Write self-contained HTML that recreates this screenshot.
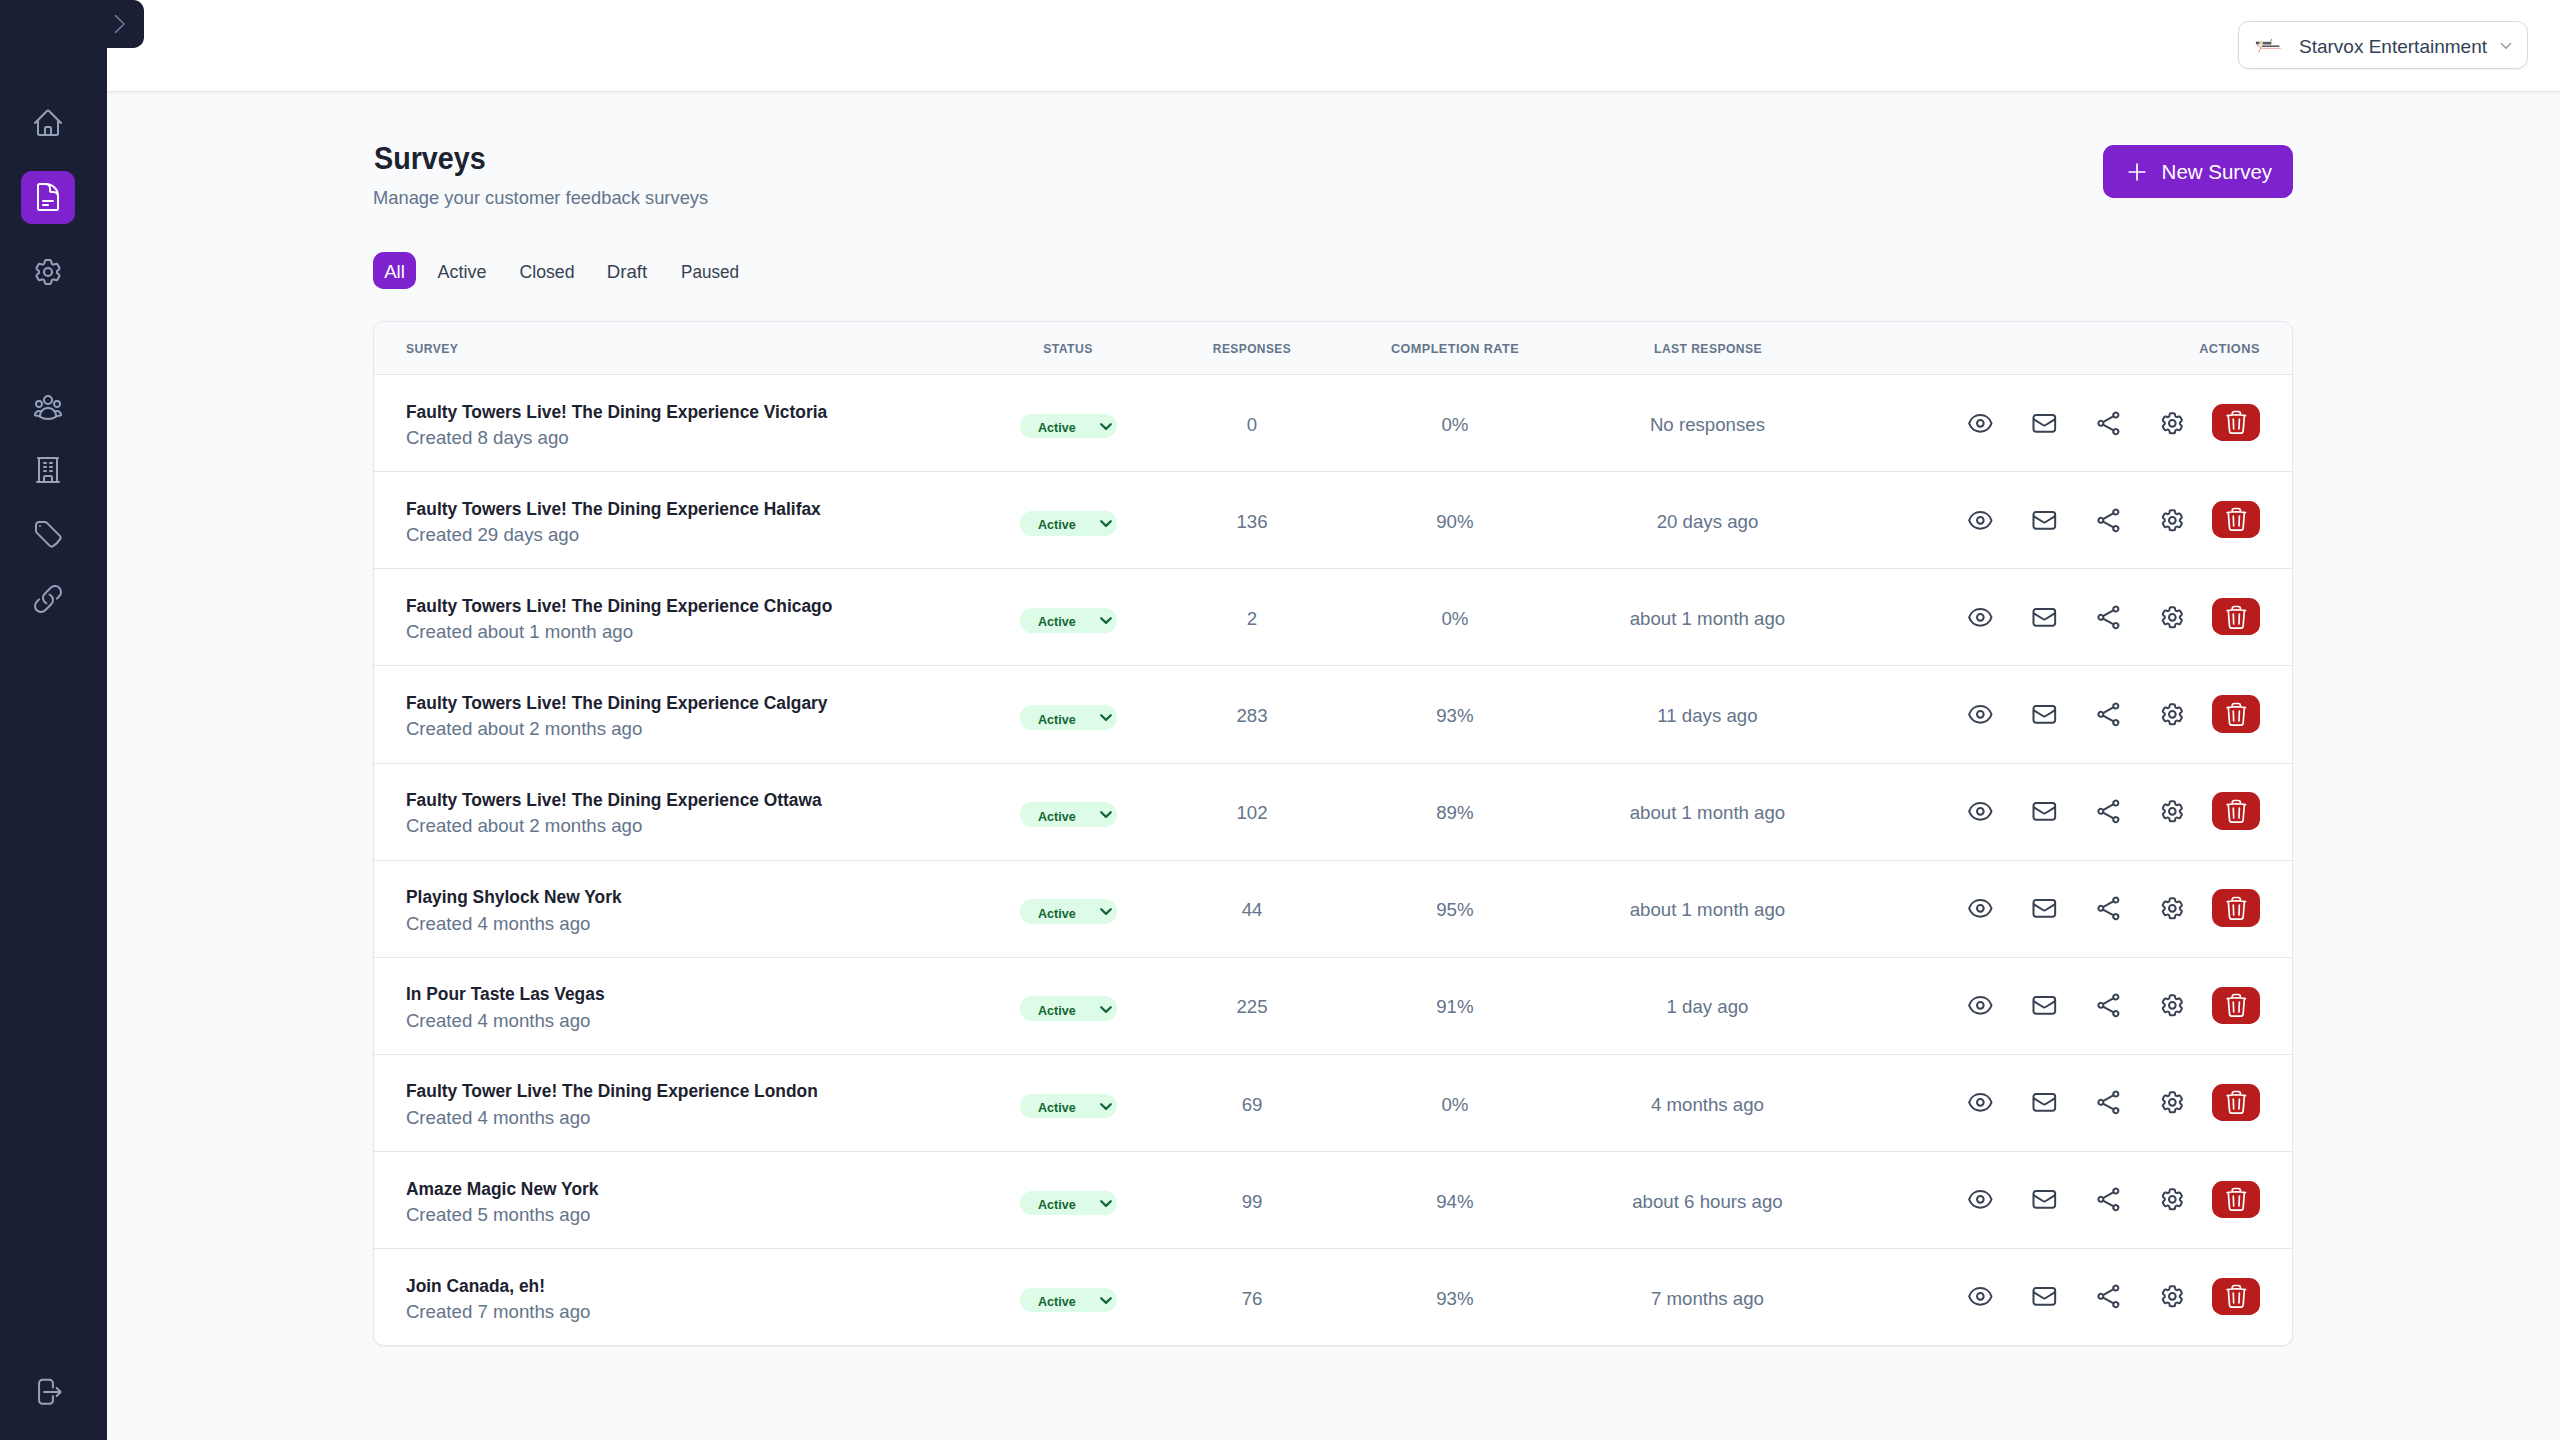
<!DOCTYPE html><html><head><meta charset="utf-8"><style>*{box-sizing:border-box;margin:0;padding:0}
html,body{width:2560px;height:1440px;overflow:hidden}
body{font-family:"Liberation Sans",sans-serif;background:#f8fafc;position:relative;color:#111827}
.sidebar{position:absolute;left:0;top:0;width:106.8px;height:1440px;background:#1b1f36;z-index:5}
.tab{position:absolute;left:100px;top:0;width:44px;height:48px;background:#1b1f36;border-radius:0 10.67px 10.67px 0;z-index:6}
.tab svg{position:absolute;left:13px;top:13px}
.header{position:absolute;left:107px;top:0;right:0;height:92.4px;background:#fff;border-bottom:1.33px solid #e5e7eb;box-shadow:0 1px 3px rgba(0,0,0,0.05)}
.active-bg{position:absolute;left:21.33px;top:170.67px;width:53.33px;height:53.33px;background:#7e22ce;border-radius:10.67px}
.org{position:absolute;left:2238px;top:21px;width:290px;height:48px;border:1.6px solid #d5d9e0;border-radius:10.67px;background:#fff;box-shadow:0 1px 2px rgba(0,0,0,0.05)}
.org .name{position:absolute;left:60px;top:14px;font-size:19px;color:#334155;white-space:nowrap}
.org .logo{position:absolute;left:16px;top:17px;width:25px;height:13px}
.org .l1{position:absolute;left:0;top:1px;width:18px;height:4px;background:#6b6b6b;opacity:.8}
.org .l2{position:absolute;left:6px;top:6px;width:19px;height:2px;background:#444}
.org .l3{position:absolute;left:4px;top:8px;width:21px;height:1.5px;background:#e35b4a}
h1{position:absolute;left:373.5px;top:139.6px;font-size:32px;transform:scaleX(0.897);transform-origin:0 0;font-weight:700;color:#1c2230;white-space:nowrap}
.sub{position:absolute;left:373px;top:186.7px;font-size:18.33px;color:#64748b;white-space:nowrap}
.btn{position:absolute;left:2102.6px;top:145px;width:190.4px;height:53px;background:#7e22ce;border-radius:10.67px;color:#fff}
.btn .t{position:absolute;left:59px;top:15.3px;font-size:20.5px;white-space:nowrap}
.tabs{position:absolute;left:373px;top:252px;height:37px}
.tabs span{position:absolute;top:1px;height:37px;line-height:37px;width:100px;text-align:center;font-size:18.67px;color:#374151;white-space:nowrap}
.tabs .on{top:0;background:#7e22ce;color:#fff;border-radius:10.67px;width:43px;text-align:center;line-height:39px}
.card{position:absolute;left:372.9px;top:320.85px;width:1920.6px;height:1025.6px;background:#fff;border:1.33px solid #e5e7eb;border-radius:10.67px;box-shadow:0 1px 2px rgba(0,0,0,0.05);overflow:hidden}
.thead{position:absolute;left:0;top:0;right:0;height:53.3px;background:#f8fafc;border-bottom:1.33px solid #e5e7eb}
.th{position:absolute;top:19.4px;font-size:12.8px;font-weight:700;color:#64748b;letter-spacing:0.45px;white-space:nowrap}
.th.c{width:300px;text-align:center}
.row{position:absolute;left:0;right:0;height:97.1px;border-bottom:1.33px solid #e5e7eb}
.row.last{border-bottom:none}
.title{position:absolute;left:32px;top:26.6px;font-size:18px;transform:scaleX(0.965);transform-origin:0 0;font-weight:700;color:#1c2230;white-space:nowrap}
.created{position:absolute;left:32px;top:51.9px;font-size:18.67px;color:#64748b;white-space:nowrap}
.pill{position:absolute;left:646px;top:38.7px;width:97px;height:24.67px;border-radius:12.33px;background:#dcfce7}
.pill .t{position:absolute;left:18.4px;top:6.4px;font-size:13.33px;transform:scaleX(0.94);transform-origin:0 0;font-weight:700;color:#166534}
.pill svg{position:absolute;left:79px;top:8.1px}
.num{position:absolute;top:38.7px;font-size:18.67px;color:#64748b;white-space:nowrap;text-align:center;width:300px}
.trash{position:absolute;left:1838px;top:28.8px;width:48px;height:37.3px;background:#b91c1c;border-radius:10.67px}
</style></head><body>
<div class="sidebar"><div class="active-bg"></div>
<svg style="position:absolute;left:32.00px;top:106.50px" width="32" height="32" viewBox="0 0 24 24" fill="none" stroke="#94a3b8" stroke-width="1.5" stroke-linecap="round" stroke-linejoin="round"><path d="m2.25 12 8.954-8.955c.44-.439 1.152-.439 1.591 0L21.75 12M4.5 9.75v10.125c0 .621.504 1.125 1.125 1.125H9.75v-4.875c0-.621.504-1.125 1.125-1.125h2.25c.621 0 1.125.504 1.125 1.125V21h4.125c.621 0 1.125-.504 1.125-1.125V9.75M8.25 21h8.25"/></svg>
<svg style="position:absolute;left:32.00px;top:181.30px" width="32" height="32" viewBox="0 0 24 24" fill="none" stroke="#ffffff" stroke-width="1.5" stroke-linecap="round" stroke-linejoin="round"><path d="M19.5 14.25v-2.625a3.375 3.375 0 0 0-3.375-3.375h-1.5A1.125 1.125 0 0 1 13.5 7.125v-1.5a3.375 3.375 0 0 0-3.375-3.375H8.25m0 12.75h7.5m-7.5 3H12M10.5 2.25H5.625c-.621 0-1.125.504-1.125 1.125v17.25c0 .621.504 1.125 1.125 1.125h12.75c.621 0 1.125-.504 1.125-1.125V11.25a9 9 0 0 0-9-9Z"/></svg>
<svg style="position:absolute;left:32.00px;top:256.00px" width="32" height="32" viewBox="0 0 24 24" fill="none" stroke="#94a3b8" stroke-width="1.5" stroke-linecap="round" stroke-linejoin="round"><path d="M9.594 3.94c.09-.542.56-.94 1.11-.94h2.593c.55 0 1.02.398 1.11.94l.213 1.281c.063.374.313.686.645.87.074.04.147.083.22.127.325.196.72.257 1.075.124l1.217-.456a1.125 1.125 0 0 1 1.37.49l1.296 2.247a1.125 1.125 0 0 1-.26 1.431l-1.003.827c-.293.241-.438.613-.43.992a7.723 7.723 0 0 1 0 .255c-.008.378.137.75.43.991l1.004.827c.424.35.534.955.26 1.43l-1.298 2.247a1.125 1.125 0 0 1-1.369.491l-1.217-.456c-.355-.133-.75-.072-1.076.124a6.47 6.47 0 0 1-.22.128c-.331.183-.581.495-.644.869l-.213 1.281c-.09.543-.56.94-1.11.94h-2.594c-.55 0-1.019-.398-1.11-.94l-.213-1.281c-.062-.374-.312-.686-.644-.87a6.52 6.52 0 0 1-.22-.127c-.325-.196-.72-.257-1.076-.124l-1.217.456a1.125 1.125 0 0 1-1.369-.49l-1.297-2.247a1.125 1.125 0 0 1 .26-1.431l1.004-.827c.292-.24.437-.613.43-.991a6.932 6.932 0 0 1 0-.255c.007-.38-.138-.751-.43-.992l-1.004-.827a1.125 1.125 0 0 1-.26-1.43l1.297-2.247a1.125 1.125 0 0 1 1.37-.491l1.216.456c.356.133.751.072 1.076-.124.072-.044.146-.086.22-.128.332-.183.582-.495.644-.869l.214-1.28Z"/><path d="M15 12a3 3 0 1 1-6 0 3 3 0 0 1 6 0Z"/></svg>
<svg style="position:absolute;left:32.00px;top:391.00px" width="32" height="32" viewBox="0 0 24 24" fill="none" stroke="#94a3b8" stroke-width="1.5" stroke-linecap="round" stroke-linejoin="round"><path d="M18 18.72a9.094 9.094 0 0 0 3.741-.479 3 3 0 0 0-4.682-2.72m.94 3.198.001.031c0 .225-.012.447-.037.666A11.944 11.944 0 0 1 12 21c-2.17 0-4.207-.576-5.963-1.584A6.062 6.062 0 0 1 6 18.719m12 0a5.971 5.971 0 0 0-.941-3.197m0 0A5.995 5.995 0 0 0 12 12.75a5.995 5.995 0 0 0-5.058 2.772m0 0a3 3 0 0 0-4.681 2.72 8.986 8.986 0 0 0 3.74.477m.94-3.197a5.971 5.971 0 0 0-.94 3.197M15 6.75a3 3 0 1 1-6 0 3 3 0 0 1 6 0Zm6 3a2.25 2.25 0 1 1-4.5 0 2.25 2.25 0 0 1 4.5 0Zm-13.5 0a2.25 2.25 0 1 1-4.5 0 2.25 2.25 0 0 1 4.5 0Z"/></svg>
<svg style="position:absolute;left:32.00px;top:454.40px" width="32" height="32" viewBox="0 0 24 24" fill="none" stroke="#94a3b8" stroke-width="1.5" stroke-linecap="round" stroke-linejoin="round"><path d="M3.75 21h16.5M4.5 3h15M5.25 3v18m13.5-18v18M9 6.75h1.5m-1.5 3h1.5m-1.5 3h1.5m3-6H15m-1.5 3H15m-1.5 3H15M9 21v-3.375c0-.621.504-1.125 1.125-1.125h3.75c.621 0 1.125.504 1.125 1.125V21"/></svg>
<svg style="position:absolute;left:32.00px;top:518.40px" width="32" height="32" viewBox="0 0 24 24" fill="none" stroke="#94a3b8" stroke-width="1.5" stroke-linecap="round" stroke-linejoin="round"><path d="M9.568 3H5.25A2.25 2.25 0 0 0 3 5.25v4.318c0 .597.237 1.17.659 1.591l9.581 9.581c.699.699 1.78.872 2.607.33a18.095 18.095 0 0 0 5.223-5.223c.542-.827.369-1.908-.33-2.607L11.16 3.66A2.25 2.25 0 0 0 9.568 3Z"/><path d="M6 6h.008v.008H6V6Z"/></svg>
<svg style="position:absolute;left:32.00px;top:582.60px" width="32" height="32" viewBox="0 0 24 24" fill="none" stroke="#94a3b8" stroke-width="1.5" stroke-linecap="round" stroke-linejoin="round"><path d="M13.19 8.688a4.5 4.5 0 0 1 1.242 7.244l-4.5 4.5a4.5 4.5 0 0 1-6.364-6.364l1.757-1.757m13.35-.622 1.757-1.757a4.5 4.5 0 0 0-6.364-6.364l-4.5 4.5a4.5 4.5 0 0 0 1.242 7.244"/></svg>
<svg style="position:absolute;left:32.00px;top:1376.00px" width="32" height="32" viewBox="0 0 24 24" fill="none" stroke="#94a3b8" stroke-width="1.5" stroke-linecap="round" stroke-linejoin="round"><path d="M15.7 8.6V5.4a2.5 2.5 0 0 0-2.5-2.5H7.8a2.5 2.5 0 0 0-2.5 2.5v13a2.5 2.5 0 0 0 2.5 2.5h5.4a2.5 2.5 0 0 0 2.5-2.5v-3.2M9 12h12.5m-3-3 3 3-3 3"/></svg>
</div>
<div class="tab"><svg width="18" height="22" viewBox="0 0 18 22"><path d="M2.5 2.6 L11 11 L2.5 19.4" fill="none" stroke="#6b7b92" stroke-width="1.6" stroke-linecap="round" stroke-linejoin="round"/></svg></div>
<div class="header"></div>
<div class="org"><svg style="position:absolute;left:15px;top:12px" width="28" height="20" viewBox="0 0 28 20"><rect x="1.9" y="7.6" width="3.6" height="2.7" fill="#555a62"/><rect x="5.6" y="7.2" width="2.4" height="3" fill="#f3c97a"/><rect x="8.6" y="7.8" width="8.8" height="2.7" fill="#5a5d62"/><path d="M16.6 7.4 L17.6 5.2" stroke="#555" stroke-width="0.8"/><rect x="7.6" y="11.4" width="17.8" height="1.6" fill="#5d6066"/><rect x="7.4" y="13.8" width="19.5" height="1" fill="#eba79a"/><path d="M3.3 11 Q6 12.5 7 13.8 L4.7 18" stroke="#e68080" stroke-width="1" fill="none" stroke-linecap="round"/></svg><div class="name">Starvox Entertainment</div><svg style="position:absolute;left:261.3px;top:19.9px" width="13" height="9" viewBox="0 0 13 9"><path d="M1.35 1.5 L6 6.1 L10.65 1.5" fill="none" stroke="#9ca3af" stroke-width="1.5" stroke-linecap="round" stroke-linejoin="round"/></svg></div>
<h1>Surveys</h1><div class="sub">Manage your customer feedback surveys</div>
<div class="btn"><svg style="position:absolute;left:24px;top:17px" width="20" height="20" viewBox="0 0 20 20"><path d="M10 1.5v17M1.5 10h17" stroke="#fff" stroke-width="1.7" fill="none"/></svg><div class="t">New Survey</div></div>
<div class="tabs"><span class="on" style="left:0">All</span><span style="left:39px;transform:scaleX(0.96)">Active</span><span style="left:124px;transform:scaleX(0.95)">Closed</span><span style="left:204px">Draft</span><span style="left:286.8px;transform:scaleX(0.916)">Paused</span></div>
<div class="card"><div class="thead">
<div class="th" style="left:32px;transform:scaleX(0.95);transform-origin:0 0">SURVEY</div>
<div class="th c" style="left:544.04px;transform:scaleX(0.955)">STATUS</div>
<div class="th c" style="left:728.39px;transform:scaleX(0.935)">RESPONSES</div>
<div class="th c" style="left:931.19px;transform:scaleX(0.99)">COMPLETION RATE</div>
<div class="th c" style="left:1183.79px;transform:scaleX(0.947)">LAST RESPONSE</div>
<div class="th r" style="right:32.6px;transform:scaleX(1.0);transform-origin:100% 0">ACTIONS</div>
</div>
<div class="row" style="top:53.30px">
<div class="title">Faulty Towers Live! The Dining Experience Victoria</div><div class="created">Created 8 days ago</div>
<div class="pill"><span class="t">Active</span><svg width="14" height="10" viewBox="0 0 14 10"><path d="M2.2 2.2 L7 6.9 L11.8 2.2" fill="none" stroke="#166534" stroke-width="2.2" stroke-linecap="round" stroke-linejoin="round"/></svg></div>
<div class="num" style="left:728.17px">0</div>
<div class="num" style="left:930.97px">0%</div>
<div class="num" style="left:1183.57px">No responses</div>
<svg style="position:absolute;left:1592.68px;top:34.46px" width="26.67" height="26.67" viewBox="0 0 24 24" fill="none" stroke="#374151" stroke-width="1.8" stroke-linecap="round" stroke-linejoin="round"><path d="M2.036 12.322a1.012 1.012 0 0 1 0-.639C3.423 7.51 7.36 4.5 12 4.5c4.638 0 8.573 3.007 9.963 7.178.07.207.07.431 0 .639C20.577 16.49 16.64 19.5 12 19.5c-4.638 0-8.573-3.007-9.963-7.178Z"/><path d="M15 12a3 3 0 1 1-6 0 3 3 0 0 1 6 0Z"/></svg>
<svg style="position:absolute;left:1656.78px;top:34.46px" width="26.67" height="26.67" viewBox="0 0 24 24" fill="none" stroke="#374151" stroke-width="1.8" stroke-linecap="round" stroke-linejoin="round"><path d="M21.75 6.75v10.5a2.25 2.25 0 0 1-2.25 2.25h-15a2.25 2.25 0 0 1-2.25-2.25V6.75m19.5 0A2.25 2.25 0 0 0 19.5 4.5h-15a2.25 2.25 0 0 0-2.25 2.25m19.5 0v.243a2.25 2.25 0 0 1-1.07 1.916l-7.5 4.615a2.25 2.25 0 0 1-2.36 0L3.32 8.91a2.25 2.25 0 0 1-1.07-1.916V6.75"/></svg>
<svg style="position:absolute;left:1720.63px;top:34.46px" width="26.67" height="26.67" viewBox="0 0 24 24" fill="none" stroke="#374151" stroke-width="1.8" stroke-linecap="round" stroke-linejoin="round"><path d="M7.217 10.907a2.25 2.25 0 1 0 0 2.186m0-2.186c.18.324.283.696.283 1.093s-.103.77-.283 1.093m0-2.186 9.566-5.314m-9.566 7.5 9.566 5.314m0 0a2.25 2.25 0 1 0 3.935 2.186 2.25 2.25 0 0 0-3.935-2.186Zm0-12.814a2.25 2.25 0 1 0 3.933-2.185 2.25 2.25 0 0 0-3.933 2.185Z"/></svg>
<svg style="position:absolute;left:1784.84px;top:34.46px" width="26.67" height="26.67" viewBox="0 0 24 24" fill="none" stroke="#374151" stroke-width="1.8" stroke-linecap="round" stroke-linejoin="round"><path d="M9.594 3.94c.09-.542.56-.94 1.11-.94h2.593c.55 0 1.02.398 1.11.94l.213 1.281c.063.374.313.686.645.87.074.04.147.083.22.127.325.196.72.257 1.075.124l1.217-.456a1.125 1.125 0 0 1 1.37.49l1.296 2.247a1.125 1.125 0 0 1-.26 1.431l-1.003.827c-.293.241-.438.613-.43.992a7.723 7.723 0 0 1 0 .255c-.008.378.137.75.43.991l1.004.827c.424.35.534.955.26 1.43l-1.298 2.247a1.125 1.125 0 0 1-1.369.491l-1.217-.456c-.355-.133-.75-.072-1.076.124a6.47 6.47 0 0 1-.22.128c-.331.183-.581.495-.644.869l-.213 1.281c-.09.543-.56.94-1.11.94h-2.594c-.55 0-1.019-.398-1.11-.94l-.213-1.281c-.062-.374-.312-.686-.644-.87a6.52 6.52 0 0 1-.22-.127c-.325-.196-.72-.257-1.076-.124l-1.217.456a1.125 1.125 0 0 1-1.369-.49l-1.297-2.247a1.125 1.125 0 0 1 .26-1.431l1.004-.827c.292-.24.437-.613.43-.991a6.932 6.932 0 0 1 0-.255c.007-.38-.138-.751-.43-.992l-1.004-.827a1.125 1.125 0 0 1-.26-1.43l1.297-2.247a1.125 1.125 0 0 1 1.37-.491l1.216.456c.356.133.751.072 1.076-.124.072-.044.146-.086.22-.128.332-.183.582-.495.644-.869l.214-1.28Z"/><path d="M15 12a3 3 0 1 1-6 0 3 3 0 0 1 6 0Z"/></svg>
<div class="trash"><svg style="position:absolute;left:10.66px;top:5.46px" width="26.67" height="26.67" viewBox="0 0 24 24" fill="none" stroke="#ffffff" stroke-width="1.5" stroke-linecap="round" stroke-linejoin="round"><path d="m14.74 9-.346 9m-4.788 0L9.26 9m9.968-3.21c.342.052.682.107 1.022.166m-1.022-.165L18.16 19.673a2.25 2.25 0 0 1-2.244 2.077H8.084a2.25 2.25 0 0 1-2.244-2.077L4.772 5.79m14.456 0a48.108 48.108 0 0 0-3.478-.397m-12 .562c.34-.059.68-.114 1.022-.165m0 0a48.11 48.11 0 0 1 3.478-.397m7.5 0v-.916c0-1.18-.91-2.164-2.09-2.201a51.964 51.964 0 0 0-3.32 0c-1.18.037-2.09 1.022-2.09 2.201v.916m7.5 0a48.667 48.667 0 0 0-7.5 0"/></svg></div>
</div>
<div class="row" style="top:150.40px">
<div class="title">Faulty Towers Live! The Dining Experience Halifax</div><div class="created">Created 29 days ago</div>
<div class="pill"><span class="t">Active</span><svg width="14" height="10" viewBox="0 0 14 10"><path d="M2.2 2.2 L7 6.9 L11.8 2.2" fill="none" stroke="#166534" stroke-width="2.2" stroke-linecap="round" stroke-linejoin="round"/></svg></div>
<div class="num" style="left:728.17px">136</div>
<div class="num" style="left:930.97px">90%</div>
<div class="num" style="left:1183.57px">20 days ago</div>
<svg style="position:absolute;left:1592.68px;top:34.46px" width="26.67" height="26.67" viewBox="0 0 24 24" fill="none" stroke="#374151" stroke-width="1.8" stroke-linecap="round" stroke-linejoin="round"><path d="M2.036 12.322a1.012 1.012 0 0 1 0-.639C3.423 7.51 7.36 4.5 12 4.5c4.638 0 8.573 3.007 9.963 7.178.07.207.07.431 0 .639C20.577 16.49 16.64 19.5 12 19.5c-4.638 0-8.573-3.007-9.963-7.178Z"/><path d="M15 12a3 3 0 1 1-6 0 3 3 0 0 1 6 0Z"/></svg>
<svg style="position:absolute;left:1656.78px;top:34.46px" width="26.67" height="26.67" viewBox="0 0 24 24" fill="none" stroke="#374151" stroke-width="1.8" stroke-linecap="round" stroke-linejoin="round"><path d="M21.75 6.75v10.5a2.25 2.25 0 0 1-2.25 2.25h-15a2.25 2.25 0 0 1-2.25-2.25V6.75m19.5 0A2.25 2.25 0 0 0 19.5 4.5h-15a2.25 2.25 0 0 0-2.25 2.25m19.5 0v.243a2.25 2.25 0 0 1-1.07 1.916l-7.5 4.615a2.25 2.25 0 0 1-2.36 0L3.32 8.91a2.25 2.25 0 0 1-1.07-1.916V6.75"/></svg>
<svg style="position:absolute;left:1720.63px;top:34.46px" width="26.67" height="26.67" viewBox="0 0 24 24" fill="none" stroke="#374151" stroke-width="1.8" stroke-linecap="round" stroke-linejoin="round"><path d="M7.217 10.907a2.25 2.25 0 1 0 0 2.186m0-2.186c.18.324.283.696.283 1.093s-.103.77-.283 1.093m0-2.186 9.566-5.314m-9.566 7.5 9.566 5.314m0 0a2.25 2.25 0 1 0 3.935 2.186 2.25 2.25 0 0 0-3.935-2.186Zm0-12.814a2.25 2.25 0 1 0 3.933-2.185 2.25 2.25 0 0 0-3.933 2.185Z"/></svg>
<svg style="position:absolute;left:1784.84px;top:34.46px" width="26.67" height="26.67" viewBox="0 0 24 24" fill="none" stroke="#374151" stroke-width="1.8" stroke-linecap="round" stroke-linejoin="round"><path d="M9.594 3.94c.09-.542.56-.94 1.11-.94h2.593c.55 0 1.02.398 1.11.94l.213 1.281c.063.374.313.686.645.87.074.04.147.083.22.127.325.196.72.257 1.075.124l1.217-.456a1.125 1.125 0 0 1 1.37.49l1.296 2.247a1.125 1.125 0 0 1-.26 1.431l-1.003.827c-.293.241-.438.613-.43.992a7.723 7.723 0 0 1 0 .255c-.008.378.137.75.43.991l1.004.827c.424.35.534.955.26 1.43l-1.298 2.247a1.125 1.125 0 0 1-1.369.491l-1.217-.456c-.355-.133-.75-.072-1.076.124a6.47 6.47 0 0 1-.22.128c-.331.183-.581.495-.644.869l-.213 1.281c-.09.543-.56.94-1.11.94h-2.594c-.55 0-1.019-.398-1.11-.94l-.213-1.281c-.062-.374-.312-.686-.644-.87a6.52 6.52 0 0 1-.22-.127c-.325-.196-.72-.257-1.076-.124l-1.217.456a1.125 1.125 0 0 1-1.369-.49l-1.297-2.247a1.125 1.125 0 0 1 .26-1.431l1.004-.827c.292-.24.437-.613.43-.991a6.932 6.932 0 0 1 0-.255c.007-.38-.138-.751-.43-.992l-1.004-.827a1.125 1.125 0 0 1-.26-1.43l1.297-2.247a1.125 1.125 0 0 1 1.37-.491l1.216.456c.356.133.751.072 1.076-.124.072-.044.146-.086.22-.128.332-.183.582-.495.644-.869l.214-1.28Z"/><path d="M15 12a3 3 0 1 1-6 0 3 3 0 0 1 6 0Z"/></svg>
<div class="trash"><svg style="position:absolute;left:10.66px;top:5.46px" width="26.67" height="26.67" viewBox="0 0 24 24" fill="none" stroke="#ffffff" stroke-width="1.5" stroke-linecap="round" stroke-linejoin="round"><path d="m14.74 9-.346 9m-4.788 0L9.26 9m9.968-3.21c.342.052.682.107 1.022.166m-1.022-.165L18.16 19.673a2.25 2.25 0 0 1-2.244 2.077H8.084a2.25 2.25 0 0 1-2.244-2.077L4.772 5.79m14.456 0a48.108 48.108 0 0 0-3.478-.397m-12 .562c.34-.059.68-.114 1.022-.165m0 0a48.11 48.11 0 0 1 3.478-.397m7.5 0v-.916c0-1.18-.91-2.164-2.09-2.201a51.964 51.964 0 0 0-3.32 0c-1.18.037-2.09 1.022-2.09 2.201v.916m7.5 0a48.667 48.667 0 0 0-7.5 0"/></svg></div>
</div>
<div class="row" style="top:247.50px">
<div class="title">Faulty Towers Live! The Dining Experience Chicago</div><div class="created">Created about 1 month ago</div>
<div class="pill"><span class="t">Active</span><svg width="14" height="10" viewBox="0 0 14 10"><path d="M2.2 2.2 L7 6.9 L11.8 2.2" fill="none" stroke="#166534" stroke-width="2.2" stroke-linecap="round" stroke-linejoin="round"/></svg></div>
<div class="num" style="left:728.17px">2</div>
<div class="num" style="left:930.97px">0%</div>
<div class="num" style="left:1183.57px">about 1 month ago</div>
<svg style="position:absolute;left:1592.68px;top:34.46px" width="26.67" height="26.67" viewBox="0 0 24 24" fill="none" stroke="#374151" stroke-width="1.8" stroke-linecap="round" stroke-linejoin="round"><path d="M2.036 12.322a1.012 1.012 0 0 1 0-.639C3.423 7.51 7.36 4.5 12 4.5c4.638 0 8.573 3.007 9.963 7.178.07.207.07.431 0 .639C20.577 16.49 16.64 19.5 12 19.5c-4.638 0-8.573-3.007-9.963-7.178Z"/><path d="M15 12a3 3 0 1 1-6 0 3 3 0 0 1 6 0Z"/></svg>
<svg style="position:absolute;left:1656.78px;top:34.46px" width="26.67" height="26.67" viewBox="0 0 24 24" fill="none" stroke="#374151" stroke-width="1.8" stroke-linecap="round" stroke-linejoin="round"><path d="M21.75 6.75v10.5a2.25 2.25 0 0 1-2.25 2.25h-15a2.25 2.25 0 0 1-2.25-2.25V6.75m19.5 0A2.25 2.25 0 0 0 19.5 4.5h-15a2.25 2.25 0 0 0-2.25 2.25m19.5 0v.243a2.25 2.25 0 0 1-1.07 1.916l-7.5 4.615a2.25 2.25 0 0 1-2.36 0L3.32 8.91a2.25 2.25 0 0 1-1.07-1.916V6.75"/></svg>
<svg style="position:absolute;left:1720.63px;top:34.46px" width="26.67" height="26.67" viewBox="0 0 24 24" fill="none" stroke="#374151" stroke-width="1.8" stroke-linecap="round" stroke-linejoin="round"><path d="M7.217 10.907a2.25 2.25 0 1 0 0 2.186m0-2.186c.18.324.283.696.283 1.093s-.103.77-.283 1.093m0-2.186 9.566-5.314m-9.566 7.5 9.566 5.314m0 0a2.25 2.25 0 1 0 3.935 2.186 2.25 2.25 0 0 0-3.935-2.186Zm0-12.814a2.25 2.25 0 1 0 3.933-2.185 2.25 2.25 0 0 0-3.933 2.185Z"/></svg>
<svg style="position:absolute;left:1784.84px;top:34.46px" width="26.67" height="26.67" viewBox="0 0 24 24" fill="none" stroke="#374151" stroke-width="1.8" stroke-linecap="round" stroke-linejoin="round"><path d="M9.594 3.94c.09-.542.56-.94 1.11-.94h2.593c.55 0 1.02.398 1.11.94l.213 1.281c.063.374.313.686.645.87.074.04.147.083.22.127.325.196.72.257 1.075.124l1.217-.456a1.125 1.125 0 0 1 1.37.49l1.296 2.247a1.125 1.125 0 0 1-.26 1.431l-1.003.827c-.293.241-.438.613-.43.992a7.723 7.723 0 0 1 0 .255c-.008.378.137.75.43.991l1.004.827c.424.35.534.955.26 1.43l-1.298 2.247a1.125 1.125 0 0 1-1.369.491l-1.217-.456c-.355-.133-.75-.072-1.076.124a6.47 6.47 0 0 1-.22.128c-.331.183-.581.495-.644.869l-.213 1.281c-.09.543-.56.94-1.11.94h-2.594c-.55 0-1.019-.398-1.11-.94l-.213-1.281c-.062-.374-.312-.686-.644-.87a6.52 6.52 0 0 1-.22-.127c-.325-.196-.72-.257-1.076-.124l-1.217.456a1.125 1.125 0 0 1-1.369-.49l-1.297-2.247a1.125 1.125 0 0 1 .26-1.431l1.004-.827c.292-.24.437-.613.43-.991a6.932 6.932 0 0 1 0-.255c.007-.38-.138-.751-.43-.992l-1.004-.827a1.125 1.125 0 0 1-.26-1.43l1.297-2.247a1.125 1.125 0 0 1 1.37-.491l1.216.456c.356.133.751.072 1.076-.124.072-.044.146-.086.22-.128.332-.183.582-.495.644-.869l.214-1.28Z"/><path d="M15 12a3 3 0 1 1-6 0 3 3 0 0 1 6 0Z"/></svg>
<div class="trash"><svg style="position:absolute;left:10.66px;top:5.46px" width="26.67" height="26.67" viewBox="0 0 24 24" fill="none" stroke="#ffffff" stroke-width="1.5" stroke-linecap="round" stroke-linejoin="round"><path d="m14.74 9-.346 9m-4.788 0L9.26 9m9.968-3.21c.342.052.682.107 1.022.166m-1.022-.165L18.16 19.673a2.25 2.25 0 0 1-2.244 2.077H8.084a2.25 2.25 0 0 1-2.244-2.077L4.772 5.79m14.456 0a48.108 48.108 0 0 0-3.478-.397m-12 .562c.34-.059.68-.114 1.022-.165m0 0a48.11 48.11 0 0 1 3.478-.397m7.5 0v-.916c0-1.18-.91-2.164-2.09-2.201a51.964 51.964 0 0 0-3.32 0c-1.18.037-2.09 1.022-2.09 2.201v.916m7.5 0a48.667 48.667 0 0 0-7.5 0"/></svg></div>
</div>
<div class="row" style="top:344.60px">
<div class="title">Faulty Towers Live! The Dining Experience Calgary</div><div class="created">Created about 2 months ago</div>
<div class="pill"><span class="t">Active</span><svg width="14" height="10" viewBox="0 0 14 10"><path d="M2.2 2.2 L7 6.9 L11.8 2.2" fill="none" stroke="#166534" stroke-width="2.2" stroke-linecap="round" stroke-linejoin="round"/></svg></div>
<div class="num" style="left:728.17px">283</div>
<div class="num" style="left:930.97px">93%</div>
<div class="num" style="left:1183.57px">11 days ago</div>
<svg style="position:absolute;left:1592.68px;top:34.46px" width="26.67" height="26.67" viewBox="0 0 24 24" fill="none" stroke="#374151" stroke-width="1.8" stroke-linecap="round" stroke-linejoin="round"><path d="M2.036 12.322a1.012 1.012 0 0 1 0-.639C3.423 7.51 7.36 4.5 12 4.5c4.638 0 8.573 3.007 9.963 7.178.07.207.07.431 0 .639C20.577 16.49 16.64 19.5 12 19.5c-4.638 0-8.573-3.007-9.963-7.178Z"/><path d="M15 12a3 3 0 1 1-6 0 3 3 0 0 1 6 0Z"/></svg>
<svg style="position:absolute;left:1656.78px;top:34.46px" width="26.67" height="26.67" viewBox="0 0 24 24" fill="none" stroke="#374151" stroke-width="1.8" stroke-linecap="round" stroke-linejoin="round"><path d="M21.75 6.75v10.5a2.25 2.25 0 0 1-2.25 2.25h-15a2.25 2.25 0 0 1-2.25-2.25V6.75m19.5 0A2.25 2.25 0 0 0 19.5 4.5h-15a2.25 2.25 0 0 0-2.25 2.25m19.5 0v.243a2.25 2.25 0 0 1-1.07 1.916l-7.5 4.615a2.25 2.25 0 0 1-2.36 0L3.32 8.91a2.25 2.25 0 0 1-1.07-1.916V6.75"/></svg>
<svg style="position:absolute;left:1720.63px;top:34.46px" width="26.67" height="26.67" viewBox="0 0 24 24" fill="none" stroke="#374151" stroke-width="1.8" stroke-linecap="round" stroke-linejoin="round"><path d="M7.217 10.907a2.25 2.25 0 1 0 0 2.186m0-2.186c.18.324.283.696.283 1.093s-.103.77-.283 1.093m0-2.186 9.566-5.314m-9.566 7.5 9.566 5.314m0 0a2.25 2.25 0 1 0 3.935 2.186 2.25 2.25 0 0 0-3.935-2.186Zm0-12.814a2.25 2.25 0 1 0 3.933-2.185 2.25 2.25 0 0 0-3.933 2.185Z"/></svg>
<svg style="position:absolute;left:1784.84px;top:34.46px" width="26.67" height="26.67" viewBox="0 0 24 24" fill="none" stroke="#374151" stroke-width="1.8" stroke-linecap="round" stroke-linejoin="round"><path d="M9.594 3.94c.09-.542.56-.94 1.11-.94h2.593c.55 0 1.02.398 1.11.94l.213 1.281c.063.374.313.686.645.87.074.04.147.083.22.127.325.196.72.257 1.075.124l1.217-.456a1.125 1.125 0 0 1 1.37.49l1.296 2.247a1.125 1.125 0 0 1-.26 1.431l-1.003.827c-.293.241-.438.613-.43.992a7.723 7.723 0 0 1 0 .255c-.008.378.137.75.43.991l1.004.827c.424.35.534.955.26 1.43l-1.298 2.247a1.125 1.125 0 0 1-1.369.491l-1.217-.456c-.355-.133-.75-.072-1.076.124a6.47 6.47 0 0 1-.22.128c-.331.183-.581.495-.644.869l-.213 1.281c-.09.543-.56.94-1.11.94h-2.594c-.55 0-1.019-.398-1.11-.94l-.213-1.281c-.062-.374-.312-.686-.644-.87a6.52 6.52 0 0 1-.22-.127c-.325-.196-.72-.257-1.076-.124l-1.217.456a1.125 1.125 0 0 1-1.369-.49l-1.297-2.247a1.125 1.125 0 0 1 .26-1.431l1.004-.827c.292-.24.437-.613.43-.991a6.932 6.932 0 0 1 0-.255c.007-.38-.138-.751-.43-.992l-1.004-.827a1.125 1.125 0 0 1-.26-1.43l1.297-2.247a1.125 1.125 0 0 1 1.37-.491l1.216.456c.356.133.751.072 1.076-.124.072-.044.146-.086.22-.128.332-.183.582-.495.644-.869l.214-1.28Z"/><path d="M15 12a3 3 0 1 1-6 0 3 3 0 0 1 6 0Z"/></svg>
<div class="trash"><svg style="position:absolute;left:10.66px;top:5.46px" width="26.67" height="26.67" viewBox="0 0 24 24" fill="none" stroke="#ffffff" stroke-width="1.5" stroke-linecap="round" stroke-linejoin="round"><path d="m14.74 9-.346 9m-4.788 0L9.26 9m9.968-3.21c.342.052.682.107 1.022.166m-1.022-.165L18.16 19.673a2.25 2.25 0 0 1-2.244 2.077H8.084a2.25 2.25 0 0 1-2.244-2.077L4.772 5.79m14.456 0a48.108 48.108 0 0 0-3.478-.397m-12 .562c.34-.059.68-.114 1.022-.165m0 0a48.11 48.11 0 0 1 3.478-.397m7.5 0v-.916c0-1.18-.91-2.164-2.09-2.201a51.964 51.964 0 0 0-3.32 0c-1.18.037-2.09 1.022-2.09 2.201v.916m7.5 0a48.667 48.667 0 0 0-7.5 0"/></svg></div>
</div>
<div class="row" style="top:441.70px">
<div class="title">Faulty Towers Live! The Dining Experience Ottawa</div><div class="created">Created about 2 months ago</div>
<div class="pill"><span class="t">Active</span><svg width="14" height="10" viewBox="0 0 14 10"><path d="M2.2 2.2 L7 6.9 L11.8 2.2" fill="none" stroke="#166534" stroke-width="2.2" stroke-linecap="round" stroke-linejoin="round"/></svg></div>
<div class="num" style="left:728.17px">102</div>
<div class="num" style="left:930.97px">89%</div>
<div class="num" style="left:1183.57px">about 1 month ago</div>
<svg style="position:absolute;left:1592.68px;top:34.46px" width="26.67" height="26.67" viewBox="0 0 24 24" fill="none" stroke="#374151" stroke-width="1.8" stroke-linecap="round" stroke-linejoin="round"><path d="M2.036 12.322a1.012 1.012 0 0 1 0-.639C3.423 7.51 7.36 4.5 12 4.5c4.638 0 8.573 3.007 9.963 7.178.07.207.07.431 0 .639C20.577 16.49 16.64 19.5 12 19.5c-4.638 0-8.573-3.007-9.963-7.178Z"/><path d="M15 12a3 3 0 1 1-6 0 3 3 0 0 1 6 0Z"/></svg>
<svg style="position:absolute;left:1656.78px;top:34.46px" width="26.67" height="26.67" viewBox="0 0 24 24" fill="none" stroke="#374151" stroke-width="1.8" stroke-linecap="round" stroke-linejoin="round"><path d="M21.75 6.75v10.5a2.25 2.25 0 0 1-2.25 2.25h-15a2.25 2.25 0 0 1-2.25-2.25V6.75m19.5 0A2.25 2.25 0 0 0 19.5 4.5h-15a2.25 2.25 0 0 0-2.25 2.25m19.5 0v.243a2.25 2.25 0 0 1-1.07 1.916l-7.5 4.615a2.25 2.25 0 0 1-2.36 0L3.32 8.91a2.25 2.25 0 0 1-1.07-1.916V6.75"/></svg>
<svg style="position:absolute;left:1720.63px;top:34.46px" width="26.67" height="26.67" viewBox="0 0 24 24" fill="none" stroke="#374151" stroke-width="1.8" stroke-linecap="round" stroke-linejoin="round"><path d="M7.217 10.907a2.25 2.25 0 1 0 0 2.186m0-2.186c.18.324.283.696.283 1.093s-.103.77-.283 1.093m0-2.186 9.566-5.314m-9.566 7.5 9.566 5.314m0 0a2.25 2.25 0 1 0 3.935 2.186 2.25 2.25 0 0 0-3.935-2.186Zm0-12.814a2.25 2.25 0 1 0 3.933-2.185 2.25 2.25 0 0 0-3.933 2.185Z"/></svg>
<svg style="position:absolute;left:1784.84px;top:34.46px" width="26.67" height="26.67" viewBox="0 0 24 24" fill="none" stroke="#374151" stroke-width="1.8" stroke-linecap="round" stroke-linejoin="round"><path d="M9.594 3.94c.09-.542.56-.94 1.11-.94h2.593c.55 0 1.02.398 1.11.94l.213 1.281c.063.374.313.686.645.87.074.04.147.083.22.127.325.196.72.257 1.075.124l1.217-.456a1.125 1.125 0 0 1 1.37.49l1.296 2.247a1.125 1.125 0 0 1-.26 1.431l-1.003.827c-.293.241-.438.613-.43.992a7.723 7.723 0 0 1 0 .255c-.008.378.137.75.43.991l1.004.827c.424.35.534.955.26 1.43l-1.298 2.247a1.125 1.125 0 0 1-1.369.491l-1.217-.456c-.355-.133-.75-.072-1.076.124a6.47 6.47 0 0 1-.22.128c-.331.183-.581.495-.644.869l-.213 1.281c-.09.543-.56.94-1.11.94h-2.594c-.55 0-1.019-.398-1.11-.94l-.213-1.281c-.062-.374-.312-.686-.644-.87a6.52 6.52 0 0 1-.22-.127c-.325-.196-.72-.257-1.076-.124l-1.217.456a1.125 1.125 0 0 1-1.369-.49l-1.297-2.247a1.125 1.125 0 0 1 .26-1.431l1.004-.827c.292-.24.437-.613.43-.991a6.932 6.932 0 0 1 0-.255c.007-.38-.138-.751-.43-.992l-1.004-.827a1.125 1.125 0 0 1-.26-1.43l1.297-2.247a1.125 1.125 0 0 1 1.37-.491l1.216.456c.356.133.751.072 1.076-.124.072-.044.146-.086.22-.128.332-.183.582-.495.644-.869l.214-1.28Z"/><path d="M15 12a3 3 0 1 1-6 0 3 3 0 0 1 6 0Z"/></svg>
<div class="trash"><svg style="position:absolute;left:10.66px;top:5.46px" width="26.67" height="26.67" viewBox="0 0 24 24" fill="none" stroke="#ffffff" stroke-width="1.5" stroke-linecap="round" stroke-linejoin="round"><path d="m14.74 9-.346 9m-4.788 0L9.26 9m9.968-3.21c.342.052.682.107 1.022.166m-1.022-.165L18.16 19.673a2.25 2.25 0 0 1-2.244 2.077H8.084a2.25 2.25 0 0 1-2.244-2.077L4.772 5.79m14.456 0a48.108 48.108 0 0 0-3.478-.397m-12 .562c.34-.059.68-.114 1.022-.165m0 0a48.11 48.11 0 0 1 3.478-.397m7.5 0v-.916c0-1.18-.91-2.164-2.09-2.201a51.964 51.964 0 0 0-3.32 0c-1.18.037-2.09 1.022-2.09 2.201v.916m7.5 0a48.667 48.667 0 0 0-7.5 0"/></svg></div>
</div>
<div class="row" style="top:538.80px">
<div class="title">Playing Shylock New York</div><div class="created">Created 4 months ago</div>
<div class="pill"><span class="t">Active</span><svg width="14" height="10" viewBox="0 0 14 10"><path d="M2.2 2.2 L7 6.9 L11.8 2.2" fill="none" stroke="#166534" stroke-width="2.2" stroke-linecap="round" stroke-linejoin="round"/></svg></div>
<div class="num" style="left:728.17px">44</div>
<div class="num" style="left:930.97px">95%</div>
<div class="num" style="left:1183.57px">about 1 month ago</div>
<svg style="position:absolute;left:1592.68px;top:34.46px" width="26.67" height="26.67" viewBox="0 0 24 24" fill="none" stroke="#374151" stroke-width="1.8" stroke-linecap="round" stroke-linejoin="round"><path d="M2.036 12.322a1.012 1.012 0 0 1 0-.639C3.423 7.51 7.36 4.5 12 4.5c4.638 0 8.573 3.007 9.963 7.178.07.207.07.431 0 .639C20.577 16.49 16.64 19.5 12 19.5c-4.638 0-8.573-3.007-9.963-7.178Z"/><path d="M15 12a3 3 0 1 1-6 0 3 3 0 0 1 6 0Z"/></svg>
<svg style="position:absolute;left:1656.78px;top:34.46px" width="26.67" height="26.67" viewBox="0 0 24 24" fill="none" stroke="#374151" stroke-width="1.8" stroke-linecap="round" stroke-linejoin="round"><path d="M21.75 6.75v10.5a2.25 2.25 0 0 1-2.25 2.25h-15a2.25 2.25 0 0 1-2.25-2.25V6.75m19.5 0A2.25 2.25 0 0 0 19.5 4.5h-15a2.25 2.25 0 0 0-2.25 2.25m19.5 0v.243a2.25 2.25 0 0 1-1.07 1.916l-7.5 4.615a2.25 2.25 0 0 1-2.36 0L3.32 8.91a2.25 2.25 0 0 1-1.07-1.916V6.75"/></svg>
<svg style="position:absolute;left:1720.63px;top:34.46px" width="26.67" height="26.67" viewBox="0 0 24 24" fill="none" stroke="#374151" stroke-width="1.8" stroke-linecap="round" stroke-linejoin="round"><path d="M7.217 10.907a2.25 2.25 0 1 0 0 2.186m0-2.186c.18.324.283.696.283 1.093s-.103.77-.283 1.093m0-2.186 9.566-5.314m-9.566 7.5 9.566 5.314m0 0a2.25 2.25 0 1 0 3.935 2.186 2.25 2.25 0 0 0-3.935-2.186Zm0-12.814a2.25 2.25 0 1 0 3.933-2.185 2.25 2.25 0 0 0-3.933 2.185Z"/></svg>
<svg style="position:absolute;left:1784.84px;top:34.46px" width="26.67" height="26.67" viewBox="0 0 24 24" fill="none" stroke="#374151" stroke-width="1.8" stroke-linecap="round" stroke-linejoin="round"><path d="M9.594 3.94c.09-.542.56-.94 1.11-.94h2.593c.55 0 1.02.398 1.11.94l.213 1.281c.063.374.313.686.645.87.074.04.147.083.22.127.325.196.72.257 1.075.124l1.217-.456a1.125 1.125 0 0 1 1.37.49l1.296 2.247a1.125 1.125 0 0 1-.26 1.431l-1.003.827c-.293.241-.438.613-.43.992a7.723 7.723 0 0 1 0 .255c-.008.378.137.75.43.991l1.004.827c.424.35.534.955.26 1.43l-1.298 2.247a1.125 1.125 0 0 1-1.369.491l-1.217-.456c-.355-.133-.75-.072-1.076.124a6.47 6.47 0 0 1-.22.128c-.331.183-.581.495-.644.869l-.213 1.281c-.09.543-.56.94-1.11.94h-2.594c-.55 0-1.019-.398-1.11-.94l-.213-1.281c-.062-.374-.312-.686-.644-.87a6.52 6.52 0 0 1-.22-.127c-.325-.196-.72-.257-1.076-.124l-1.217.456a1.125 1.125 0 0 1-1.369-.49l-1.297-2.247a1.125 1.125 0 0 1 .26-1.431l1.004-.827c.292-.24.437-.613.43-.991a6.932 6.932 0 0 1 0-.255c.007-.38-.138-.751-.43-.992l-1.004-.827a1.125 1.125 0 0 1-.26-1.43l1.297-2.247a1.125 1.125 0 0 1 1.37-.491l1.216.456c.356.133.751.072 1.076-.124.072-.044.146-.086.22-.128.332-.183.582-.495.644-.869l.214-1.28Z"/><path d="M15 12a3 3 0 1 1-6 0 3 3 0 0 1 6 0Z"/></svg>
<div class="trash"><svg style="position:absolute;left:10.66px;top:5.46px" width="26.67" height="26.67" viewBox="0 0 24 24" fill="none" stroke="#ffffff" stroke-width="1.5" stroke-linecap="round" stroke-linejoin="round"><path d="m14.74 9-.346 9m-4.788 0L9.26 9m9.968-3.21c.342.052.682.107 1.022.166m-1.022-.165L18.16 19.673a2.25 2.25 0 0 1-2.244 2.077H8.084a2.25 2.25 0 0 1-2.244-2.077L4.772 5.79m14.456 0a48.108 48.108 0 0 0-3.478-.397m-12 .562c.34-.059.68-.114 1.022-.165m0 0a48.11 48.11 0 0 1 3.478-.397m7.5 0v-.916c0-1.18-.91-2.164-2.09-2.201a51.964 51.964 0 0 0-3.32 0c-1.18.037-2.09 1.022-2.09 2.201v.916m7.5 0a48.667 48.667 0 0 0-7.5 0"/></svg></div>
</div>
<div class="row" style="top:635.90px">
<div class="title">In Pour Taste Las Vegas</div><div class="created">Created 4 months ago</div>
<div class="pill"><span class="t">Active</span><svg width="14" height="10" viewBox="0 0 14 10"><path d="M2.2 2.2 L7 6.9 L11.8 2.2" fill="none" stroke="#166534" stroke-width="2.2" stroke-linecap="round" stroke-linejoin="round"/></svg></div>
<div class="num" style="left:728.17px">225</div>
<div class="num" style="left:930.97px">91%</div>
<div class="num" style="left:1183.57px">1 day ago</div>
<svg style="position:absolute;left:1592.68px;top:34.46px" width="26.67" height="26.67" viewBox="0 0 24 24" fill="none" stroke="#374151" stroke-width="1.8" stroke-linecap="round" stroke-linejoin="round"><path d="M2.036 12.322a1.012 1.012 0 0 1 0-.639C3.423 7.51 7.36 4.5 12 4.5c4.638 0 8.573 3.007 9.963 7.178.07.207.07.431 0 .639C20.577 16.49 16.64 19.5 12 19.5c-4.638 0-8.573-3.007-9.963-7.178Z"/><path d="M15 12a3 3 0 1 1-6 0 3 3 0 0 1 6 0Z"/></svg>
<svg style="position:absolute;left:1656.78px;top:34.46px" width="26.67" height="26.67" viewBox="0 0 24 24" fill="none" stroke="#374151" stroke-width="1.8" stroke-linecap="round" stroke-linejoin="round"><path d="M21.75 6.75v10.5a2.25 2.25 0 0 1-2.25 2.25h-15a2.25 2.25 0 0 1-2.25-2.25V6.75m19.5 0A2.25 2.25 0 0 0 19.5 4.5h-15a2.25 2.25 0 0 0-2.25 2.25m19.5 0v.243a2.25 2.25 0 0 1-1.07 1.916l-7.5 4.615a2.25 2.25 0 0 1-2.36 0L3.32 8.91a2.25 2.25 0 0 1-1.07-1.916V6.75"/></svg>
<svg style="position:absolute;left:1720.63px;top:34.46px" width="26.67" height="26.67" viewBox="0 0 24 24" fill="none" stroke="#374151" stroke-width="1.8" stroke-linecap="round" stroke-linejoin="round"><path d="M7.217 10.907a2.25 2.25 0 1 0 0 2.186m0-2.186c.18.324.283.696.283 1.093s-.103.77-.283 1.093m0-2.186 9.566-5.314m-9.566 7.5 9.566 5.314m0 0a2.25 2.25 0 1 0 3.935 2.186 2.25 2.25 0 0 0-3.935-2.186Zm0-12.814a2.25 2.25 0 1 0 3.933-2.185 2.25 2.25 0 0 0-3.933 2.185Z"/></svg>
<svg style="position:absolute;left:1784.84px;top:34.46px" width="26.67" height="26.67" viewBox="0 0 24 24" fill="none" stroke="#374151" stroke-width="1.8" stroke-linecap="round" stroke-linejoin="round"><path d="M9.594 3.94c.09-.542.56-.94 1.11-.94h2.593c.55 0 1.02.398 1.11.94l.213 1.281c.063.374.313.686.645.87.074.04.147.083.22.127.325.196.72.257 1.075.124l1.217-.456a1.125 1.125 0 0 1 1.37.49l1.296 2.247a1.125 1.125 0 0 1-.26 1.431l-1.003.827c-.293.241-.438.613-.43.992a7.723 7.723 0 0 1 0 .255c-.008.378.137.75.43.991l1.004.827c.424.35.534.955.26 1.43l-1.298 2.247a1.125 1.125 0 0 1-1.369.491l-1.217-.456c-.355-.133-.75-.072-1.076.124a6.47 6.47 0 0 1-.22.128c-.331.183-.581.495-.644.869l-.213 1.281c-.09.543-.56.94-1.11.94h-2.594c-.55 0-1.019-.398-1.11-.94l-.213-1.281c-.062-.374-.312-.686-.644-.87a6.52 6.52 0 0 1-.22-.127c-.325-.196-.72-.257-1.076-.124l-1.217.456a1.125 1.125 0 0 1-1.369-.49l-1.297-2.247a1.125 1.125 0 0 1 .26-1.431l1.004-.827c.292-.24.437-.613.43-.991a6.932 6.932 0 0 1 0-.255c.007-.38-.138-.751-.43-.992l-1.004-.827a1.125 1.125 0 0 1-.26-1.43l1.297-2.247a1.125 1.125 0 0 1 1.37-.491l1.216.456c.356.133.751.072 1.076-.124.072-.044.146-.086.22-.128.332-.183.582-.495.644-.869l.214-1.28Z"/><path d="M15 12a3 3 0 1 1-6 0 3 3 0 0 1 6 0Z"/></svg>
<div class="trash"><svg style="position:absolute;left:10.66px;top:5.46px" width="26.67" height="26.67" viewBox="0 0 24 24" fill="none" stroke="#ffffff" stroke-width="1.5" stroke-linecap="round" stroke-linejoin="round"><path d="m14.74 9-.346 9m-4.788 0L9.26 9m9.968-3.21c.342.052.682.107 1.022.166m-1.022-.165L18.16 19.673a2.25 2.25 0 0 1-2.244 2.077H8.084a2.25 2.25 0 0 1-2.244-2.077L4.772 5.79m14.456 0a48.108 48.108 0 0 0-3.478-.397m-12 .562c.34-.059.68-.114 1.022-.165m0 0a48.11 48.11 0 0 1 3.478-.397m7.5 0v-.916c0-1.18-.91-2.164-2.09-2.201a51.964 51.964 0 0 0-3.32 0c-1.18.037-2.09 1.022-2.09 2.201v.916m7.5 0a48.667 48.667 0 0 0-7.5 0"/></svg></div>
</div>
<div class="row" style="top:733.00px">
<div class="title">Faulty Tower Live! The Dining Experience London</div><div class="created">Created 4 months ago</div>
<div class="pill"><span class="t">Active</span><svg width="14" height="10" viewBox="0 0 14 10"><path d="M2.2 2.2 L7 6.9 L11.8 2.2" fill="none" stroke="#166534" stroke-width="2.2" stroke-linecap="round" stroke-linejoin="round"/></svg></div>
<div class="num" style="left:728.17px">69</div>
<div class="num" style="left:930.97px">0%</div>
<div class="num" style="left:1183.57px">4 months ago</div>
<svg style="position:absolute;left:1592.68px;top:34.46px" width="26.67" height="26.67" viewBox="0 0 24 24" fill="none" stroke="#374151" stroke-width="1.8" stroke-linecap="round" stroke-linejoin="round"><path d="M2.036 12.322a1.012 1.012 0 0 1 0-.639C3.423 7.51 7.36 4.5 12 4.5c4.638 0 8.573 3.007 9.963 7.178.07.207.07.431 0 .639C20.577 16.49 16.64 19.5 12 19.5c-4.638 0-8.573-3.007-9.963-7.178Z"/><path d="M15 12a3 3 0 1 1-6 0 3 3 0 0 1 6 0Z"/></svg>
<svg style="position:absolute;left:1656.78px;top:34.46px" width="26.67" height="26.67" viewBox="0 0 24 24" fill="none" stroke="#374151" stroke-width="1.8" stroke-linecap="round" stroke-linejoin="round"><path d="M21.75 6.75v10.5a2.25 2.25 0 0 1-2.25 2.25h-15a2.25 2.25 0 0 1-2.25-2.25V6.75m19.5 0A2.25 2.25 0 0 0 19.5 4.5h-15a2.25 2.25 0 0 0-2.25 2.25m19.5 0v.243a2.25 2.25 0 0 1-1.07 1.916l-7.5 4.615a2.25 2.25 0 0 1-2.36 0L3.32 8.91a2.25 2.25 0 0 1-1.07-1.916V6.75"/></svg>
<svg style="position:absolute;left:1720.63px;top:34.46px" width="26.67" height="26.67" viewBox="0 0 24 24" fill="none" stroke="#374151" stroke-width="1.8" stroke-linecap="round" stroke-linejoin="round"><path d="M7.217 10.907a2.25 2.25 0 1 0 0 2.186m0-2.186c.18.324.283.696.283 1.093s-.103.77-.283 1.093m0-2.186 9.566-5.314m-9.566 7.5 9.566 5.314m0 0a2.25 2.25 0 1 0 3.935 2.186 2.25 2.25 0 0 0-3.935-2.186Zm0-12.814a2.25 2.25 0 1 0 3.933-2.185 2.25 2.25 0 0 0-3.933 2.185Z"/></svg>
<svg style="position:absolute;left:1784.84px;top:34.46px" width="26.67" height="26.67" viewBox="0 0 24 24" fill="none" stroke="#374151" stroke-width="1.8" stroke-linecap="round" stroke-linejoin="round"><path d="M9.594 3.94c.09-.542.56-.94 1.11-.94h2.593c.55 0 1.02.398 1.11.94l.213 1.281c.063.374.313.686.645.87.074.04.147.083.22.127.325.196.72.257 1.075.124l1.217-.456a1.125 1.125 0 0 1 1.37.49l1.296 2.247a1.125 1.125 0 0 1-.26 1.431l-1.003.827c-.293.241-.438.613-.43.992a7.723 7.723 0 0 1 0 .255c-.008.378.137.75.43.991l1.004.827c.424.35.534.955.26 1.43l-1.298 2.247a1.125 1.125 0 0 1-1.369.491l-1.217-.456c-.355-.133-.75-.072-1.076.124a6.47 6.47 0 0 1-.22.128c-.331.183-.581.495-.644.869l-.213 1.281c-.09.543-.56.94-1.11.94h-2.594c-.55 0-1.019-.398-1.11-.94l-.213-1.281c-.062-.374-.312-.686-.644-.87a6.52 6.52 0 0 1-.22-.127c-.325-.196-.72-.257-1.076-.124l-1.217.456a1.125 1.125 0 0 1-1.369-.49l-1.297-2.247a1.125 1.125 0 0 1 .26-1.431l1.004-.827c.292-.24.437-.613.43-.991a6.932 6.932 0 0 1 0-.255c.007-.38-.138-.751-.43-.992l-1.004-.827a1.125 1.125 0 0 1-.26-1.43l1.297-2.247a1.125 1.125 0 0 1 1.37-.491l1.216.456c.356.133.751.072 1.076-.124.072-.044.146-.086.22-.128.332-.183.582-.495.644-.869l.214-1.28Z"/><path d="M15 12a3 3 0 1 1-6 0 3 3 0 0 1 6 0Z"/></svg>
<div class="trash"><svg style="position:absolute;left:10.66px;top:5.46px" width="26.67" height="26.67" viewBox="0 0 24 24" fill="none" stroke="#ffffff" stroke-width="1.5" stroke-linecap="round" stroke-linejoin="round"><path d="m14.74 9-.346 9m-4.788 0L9.26 9m9.968-3.21c.342.052.682.107 1.022.166m-1.022-.165L18.16 19.673a2.25 2.25 0 0 1-2.244 2.077H8.084a2.25 2.25 0 0 1-2.244-2.077L4.772 5.79m14.456 0a48.108 48.108 0 0 0-3.478-.397m-12 .562c.34-.059.68-.114 1.022-.165m0 0a48.11 48.11 0 0 1 3.478-.397m7.5 0v-.916c0-1.18-.91-2.164-2.09-2.201a51.964 51.964 0 0 0-3.32 0c-1.18.037-2.09 1.022-2.09 2.201v.916m7.5 0a48.667 48.667 0 0 0-7.5 0"/></svg></div>
</div>
<div class="row" style="top:830.10px">
<div class="title">Amaze Magic New York</div><div class="created">Created 5 months ago</div>
<div class="pill"><span class="t">Active</span><svg width="14" height="10" viewBox="0 0 14 10"><path d="M2.2 2.2 L7 6.9 L11.8 2.2" fill="none" stroke="#166534" stroke-width="2.2" stroke-linecap="round" stroke-linejoin="round"/></svg></div>
<div class="num" style="left:728.17px">99</div>
<div class="num" style="left:930.97px">94%</div>
<div class="num" style="left:1183.57px">about 6 hours ago</div>
<svg style="position:absolute;left:1592.68px;top:34.46px" width="26.67" height="26.67" viewBox="0 0 24 24" fill="none" stroke="#374151" stroke-width="1.8" stroke-linecap="round" stroke-linejoin="round"><path d="M2.036 12.322a1.012 1.012 0 0 1 0-.639C3.423 7.51 7.36 4.5 12 4.5c4.638 0 8.573 3.007 9.963 7.178.07.207.07.431 0 .639C20.577 16.49 16.64 19.5 12 19.5c-4.638 0-8.573-3.007-9.963-7.178Z"/><path d="M15 12a3 3 0 1 1-6 0 3 3 0 0 1 6 0Z"/></svg>
<svg style="position:absolute;left:1656.78px;top:34.46px" width="26.67" height="26.67" viewBox="0 0 24 24" fill="none" stroke="#374151" stroke-width="1.8" stroke-linecap="round" stroke-linejoin="round"><path d="M21.75 6.75v10.5a2.25 2.25 0 0 1-2.25 2.25h-15a2.25 2.25 0 0 1-2.25-2.25V6.75m19.5 0A2.25 2.25 0 0 0 19.5 4.5h-15a2.25 2.25 0 0 0-2.25 2.25m19.5 0v.243a2.25 2.25 0 0 1-1.07 1.916l-7.5 4.615a2.25 2.25 0 0 1-2.36 0L3.32 8.91a2.25 2.25 0 0 1-1.07-1.916V6.75"/></svg>
<svg style="position:absolute;left:1720.63px;top:34.46px" width="26.67" height="26.67" viewBox="0 0 24 24" fill="none" stroke="#374151" stroke-width="1.8" stroke-linecap="round" stroke-linejoin="round"><path d="M7.217 10.907a2.25 2.25 0 1 0 0 2.186m0-2.186c.18.324.283.696.283 1.093s-.103.77-.283 1.093m0-2.186 9.566-5.314m-9.566 7.5 9.566 5.314m0 0a2.25 2.25 0 1 0 3.935 2.186 2.25 2.25 0 0 0-3.935-2.186Zm0-12.814a2.25 2.25 0 1 0 3.933-2.185 2.25 2.25 0 0 0-3.933 2.185Z"/></svg>
<svg style="position:absolute;left:1784.84px;top:34.46px" width="26.67" height="26.67" viewBox="0 0 24 24" fill="none" stroke="#374151" stroke-width="1.8" stroke-linecap="round" stroke-linejoin="round"><path d="M9.594 3.94c.09-.542.56-.94 1.11-.94h2.593c.55 0 1.02.398 1.11.94l.213 1.281c.063.374.313.686.645.87.074.04.147.083.22.127.325.196.72.257 1.075.124l1.217-.456a1.125 1.125 0 0 1 1.37.49l1.296 2.247a1.125 1.125 0 0 1-.26 1.431l-1.003.827c-.293.241-.438.613-.43.992a7.723 7.723 0 0 1 0 .255c-.008.378.137.75.43.991l1.004.827c.424.35.534.955.26 1.43l-1.298 2.247a1.125 1.125 0 0 1-1.369.491l-1.217-.456c-.355-.133-.75-.072-1.076.124a6.47 6.47 0 0 1-.22.128c-.331.183-.581.495-.644.869l-.213 1.281c-.09.543-.56.94-1.11.94h-2.594c-.55 0-1.019-.398-1.11-.94l-.213-1.281c-.062-.374-.312-.686-.644-.87a6.52 6.52 0 0 1-.22-.127c-.325-.196-.72-.257-1.076-.124l-1.217.456a1.125 1.125 0 0 1-1.369-.49l-1.297-2.247a1.125 1.125 0 0 1 .26-1.431l1.004-.827c.292-.24.437-.613.43-.991a6.932 6.932 0 0 1 0-.255c.007-.38-.138-.751-.43-.992l-1.004-.827a1.125 1.125 0 0 1-.26-1.43l1.297-2.247a1.125 1.125 0 0 1 1.37-.491l1.216.456c.356.133.751.072 1.076-.124.072-.044.146-.086.22-.128.332-.183.582-.495.644-.869l.214-1.28Z"/><path d="M15 12a3 3 0 1 1-6 0 3 3 0 0 1 6 0Z"/></svg>
<div class="trash"><svg style="position:absolute;left:10.66px;top:5.46px" width="26.67" height="26.67" viewBox="0 0 24 24" fill="none" stroke="#ffffff" stroke-width="1.5" stroke-linecap="round" stroke-linejoin="round"><path d="m14.74 9-.346 9m-4.788 0L9.26 9m9.968-3.21c.342.052.682.107 1.022.166m-1.022-.165L18.16 19.673a2.25 2.25 0 0 1-2.244 2.077H8.084a2.25 2.25 0 0 1-2.244-2.077L4.772 5.79m14.456 0a48.108 48.108 0 0 0-3.478-.397m-12 .562c.34-.059.68-.114 1.022-.165m0 0a48.11 48.11 0 0 1 3.478-.397m7.5 0v-.916c0-1.18-.91-2.164-2.09-2.201a51.964 51.964 0 0 0-3.32 0c-1.18.037-2.09 1.022-2.09 2.201v.916m7.5 0a48.667 48.667 0 0 0-7.5 0"/></svg></div>
</div>
<div class="row last" style="top:927.20px">
<div class="title">Join Canada, eh!</div><div class="created">Created 7 months ago</div>
<div class="pill"><span class="t">Active</span><svg width="14" height="10" viewBox="0 0 14 10"><path d="M2.2 2.2 L7 6.9 L11.8 2.2" fill="none" stroke="#166534" stroke-width="2.2" stroke-linecap="round" stroke-linejoin="round"/></svg></div>
<div class="num" style="left:728.17px">76</div>
<div class="num" style="left:930.97px">93%</div>
<div class="num" style="left:1183.57px">7 months ago</div>
<svg style="position:absolute;left:1592.68px;top:34.46px" width="26.67" height="26.67" viewBox="0 0 24 24" fill="none" stroke="#374151" stroke-width="1.8" stroke-linecap="round" stroke-linejoin="round"><path d="M2.036 12.322a1.012 1.012 0 0 1 0-.639C3.423 7.51 7.36 4.5 12 4.5c4.638 0 8.573 3.007 9.963 7.178.07.207.07.431 0 .639C20.577 16.49 16.64 19.5 12 19.5c-4.638 0-8.573-3.007-9.963-7.178Z"/><path d="M15 12a3 3 0 1 1-6 0 3 3 0 0 1 6 0Z"/></svg>
<svg style="position:absolute;left:1656.78px;top:34.46px" width="26.67" height="26.67" viewBox="0 0 24 24" fill="none" stroke="#374151" stroke-width="1.8" stroke-linecap="round" stroke-linejoin="round"><path d="M21.75 6.75v10.5a2.25 2.25 0 0 1-2.25 2.25h-15a2.25 2.25 0 0 1-2.25-2.25V6.75m19.5 0A2.25 2.25 0 0 0 19.5 4.5h-15a2.25 2.25 0 0 0-2.25 2.25m19.5 0v.243a2.25 2.25 0 0 1-1.07 1.916l-7.5 4.615a2.25 2.25 0 0 1-2.36 0L3.32 8.91a2.25 2.25 0 0 1-1.07-1.916V6.75"/></svg>
<svg style="position:absolute;left:1720.63px;top:34.46px" width="26.67" height="26.67" viewBox="0 0 24 24" fill="none" stroke="#374151" stroke-width="1.8" stroke-linecap="round" stroke-linejoin="round"><path d="M7.217 10.907a2.25 2.25 0 1 0 0 2.186m0-2.186c.18.324.283.696.283 1.093s-.103.77-.283 1.093m0-2.186 9.566-5.314m-9.566 7.5 9.566 5.314m0 0a2.25 2.25 0 1 0 3.935 2.186 2.25 2.25 0 0 0-3.935-2.186Zm0-12.814a2.25 2.25 0 1 0 3.933-2.185 2.25 2.25 0 0 0-3.933 2.185Z"/></svg>
<svg style="position:absolute;left:1784.84px;top:34.46px" width="26.67" height="26.67" viewBox="0 0 24 24" fill="none" stroke="#374151" stroke-width="1.8" stroke-linecap="round" stroke-linejoin="round"><path d="M9.594 3.94c.09-.542.56-.94 1.11-.94h2.593c.55 0 1.02.398 1.11.94l.213 1.281c.063.374.313.686.645.87.074.04.147.083.22.127.325.196.72.257 1.075.124l1.217-.456a1.125 1.125 0 0 1 1.37.49l1.296 2.247a1.125 1.125 0 0 1-.26 1.431l-1.003.827c-.293.241-.438.613-.43.992a7.723 7.723 0 0 1 0 .255c-.008.378.137.75.43.991l1.004.827c.424.35.534.955.26 1.43l-1.298 2.247a1.125 1.125 0 0 1-1.369.491l-1.217-.456c-.355-.133-.75-.072-1.076.124a6.47 6.47 0 0 1-.22.128c-.331.183-.581.495-.644.869l-.213 1.281c-.09.543-.56.94-1.11.94h-2.594c-.55 0-1.019-.398-1.11-.94l-.213-1.281c-.062-.374-.312-.686-.644-.87a6.52 6.52 0 0 1-.22-.127c-.325-.196-.72-.257-1.076-.124l-1.217.456a1.125 1.125 0 0 1-1.369-.49l-1.297-2.247a1.125 1.125 0 0 1 .26-1.431l1.004-.827c.292-.24.437-.613.43-.991a6.932 6.932 0 0 1 0-.255c.007-.38-.138-.751-.43-.992l-1.004-.827a1.125 1.125 0 0 1-.26-1.43l1.297-2.247a1.125 1.125 0 0 1 1.37-.491l1.216.456c.356.133.751.072 1.076-.124.072-.044.146-.086.22-.128.332-.183.582-.495.644-.869l.214-1.28Z"/><path d="M15 12a3 3 0 1 1-6 0 3 3 0 0 1 6 0Z"/></svg>
<div class="trash"><svg style="position:absolute;left:10.66px;top:5.46px" width="26.67" height="26.67" viewBox="0 0 24 24" fill="none" stroke="#ffffff" stroke-width="1.5" stroke-linecap="round" stroke-linejoin="round"><path d="m14.74 9-.346 9m-4.788 0L9.26 9m9.968-3.21c.342.052.682.107 1.022.166m-1.022-.165L18.16 19.673a2.25 2.25 0 0 1-2.244 2.077H8.084a2.25 2.25 0 0 1-2.244-2.077L4.772 5.79m14.456 0a48.108 48.108 0 0 0-3.478-.397m-12 .562c.34-.059.68-.114 1.022-.165m0 0a48.11 48.11 0 0 1 3.478-.397m7.5 0v-.916c0-1.18-.91-2.164-2.09-2.201a51.964 51.964 0 0 0-3.32 0c-1.18.037-2.09 1.022-2.09 2.201v.916m7.5 0a48.667 48.667 0 0 0-7.5 0"/></svg></div>
</div>
</div>
</body></html>
